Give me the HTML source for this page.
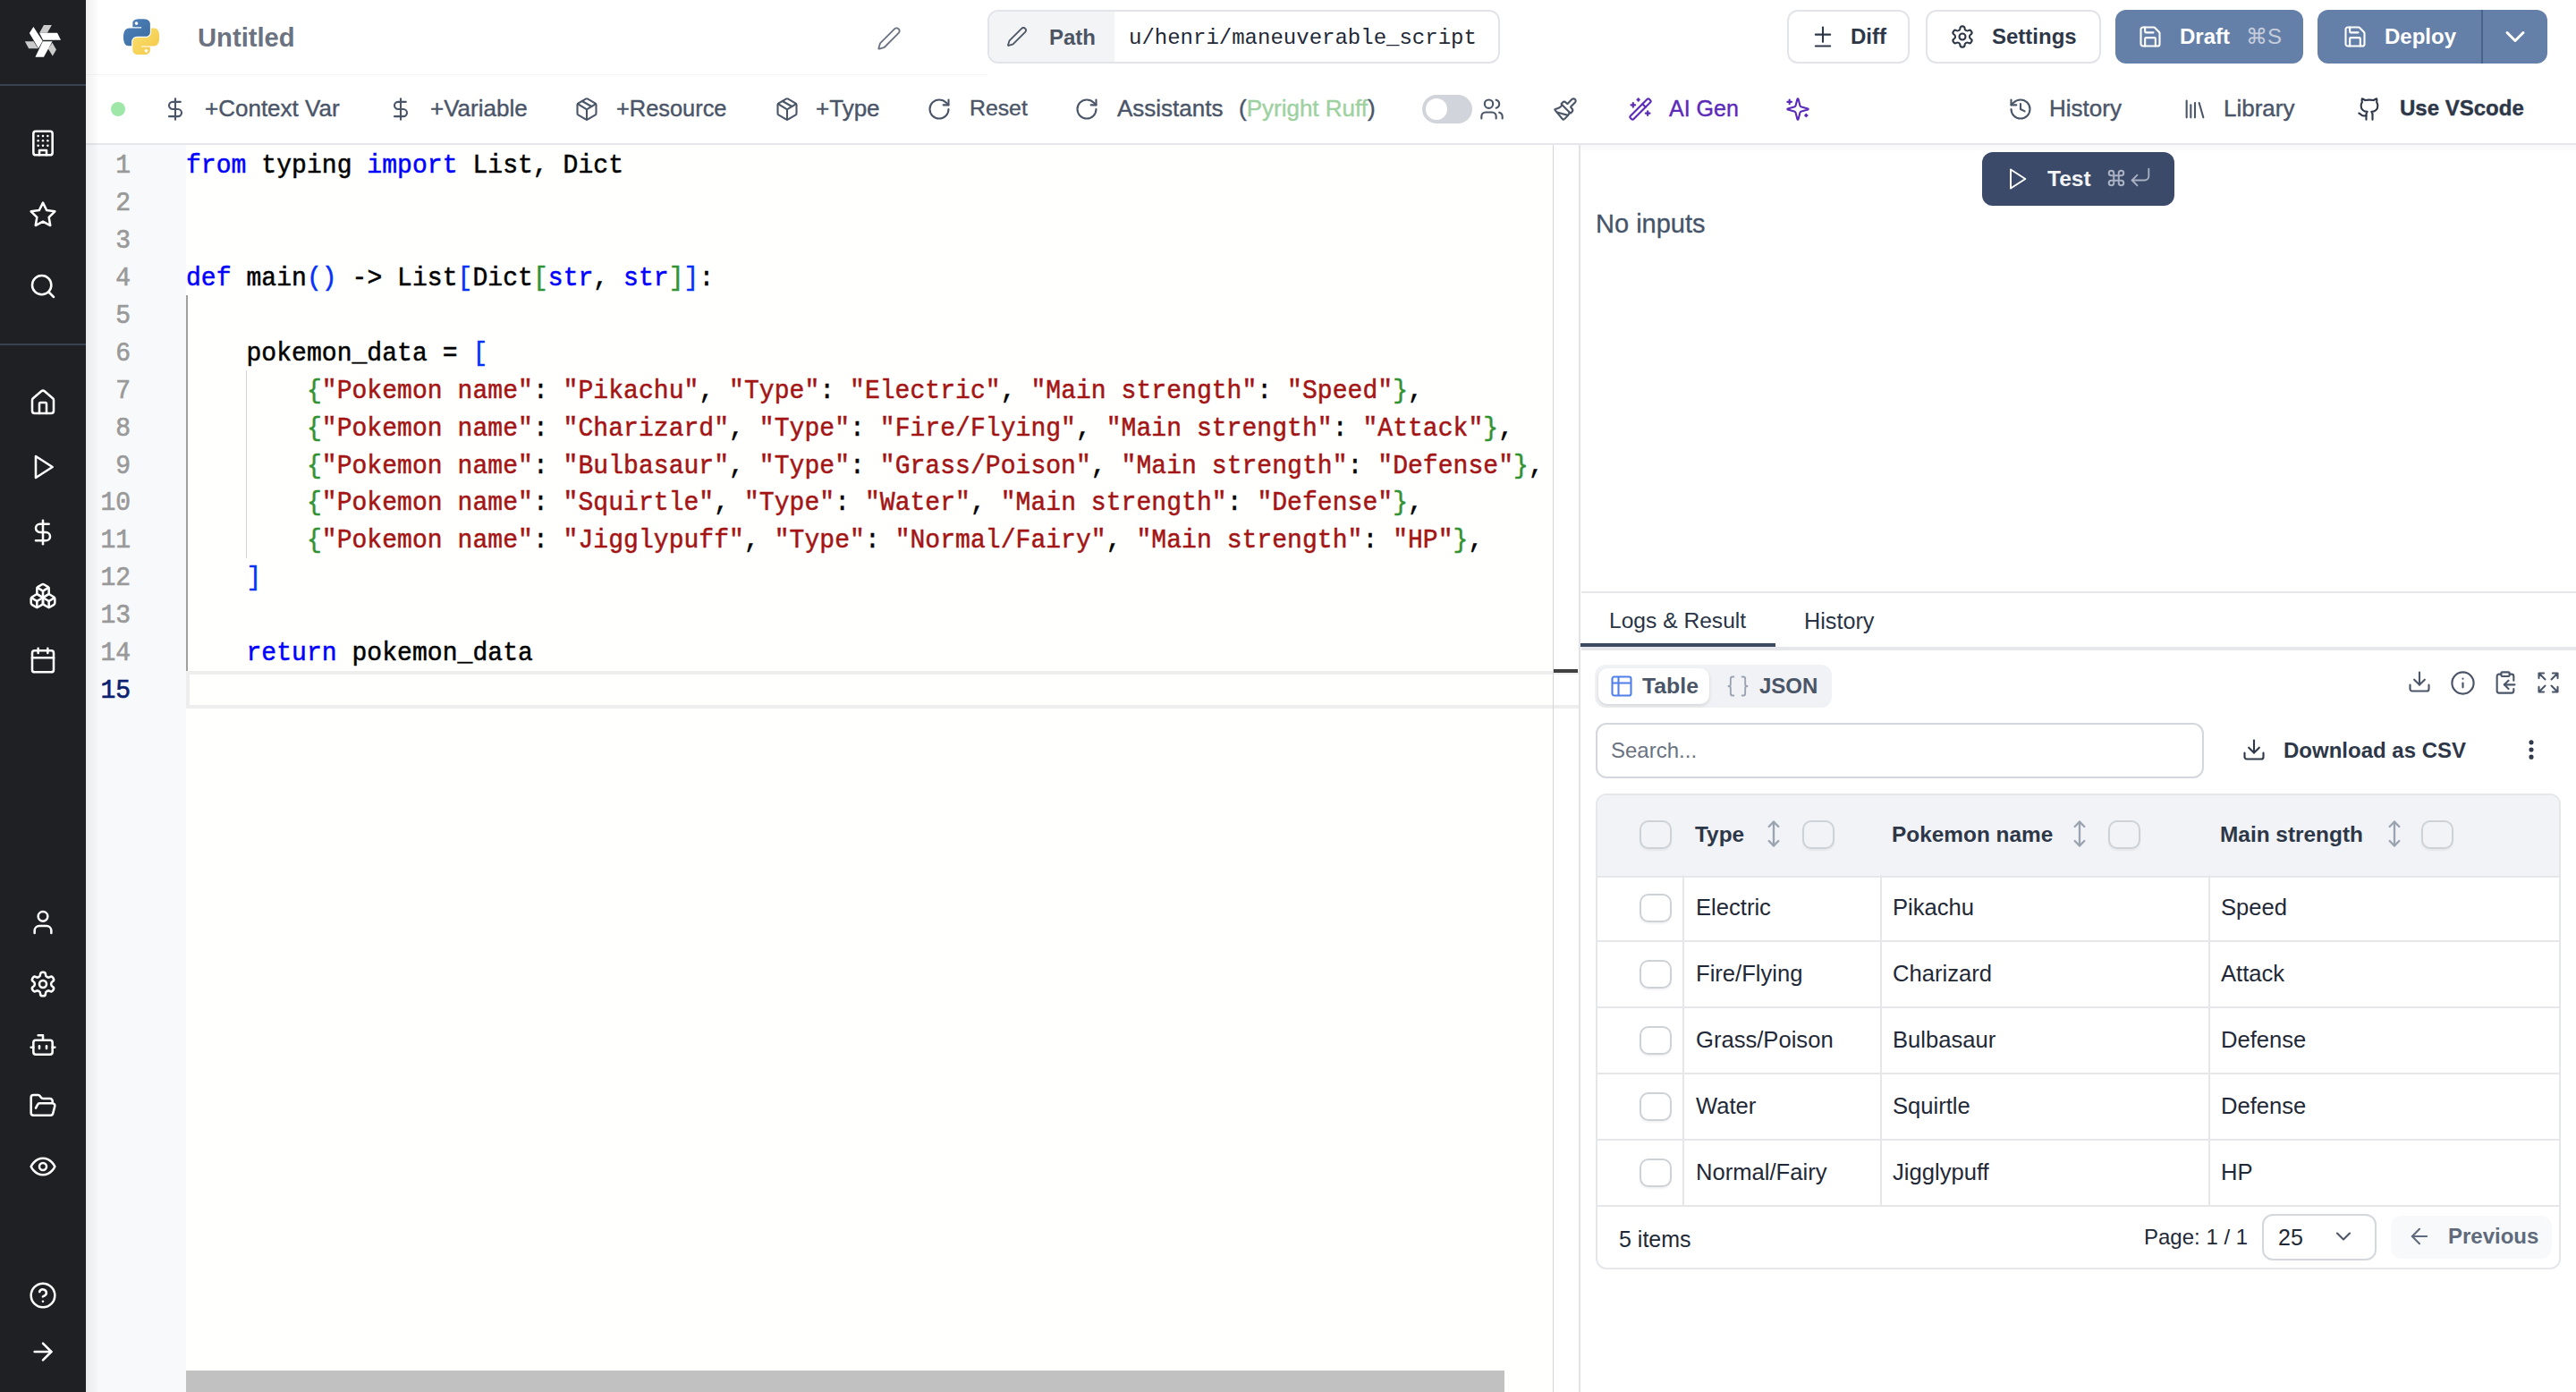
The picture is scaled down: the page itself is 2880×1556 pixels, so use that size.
<!DOCTYPE html>
<html><head><meta charset="utf-8">
<style>
html,body{margin:0;padding:0;background:#fff;overflow:hidden}
#root{position:relative;width:1440px;height:778px;zoom:2;overflow:hidden;font-family:"Liberation Sans",sans-serif;background:#fff}
.a{position:absolute}
.ic{position:absolute;fill:none;stroke:currentColor;stroke-width:2;stroke-linecap:round;stroke-linejoin:round}
.t{position:absolute;white-space:nowrap}
#side{left:0;top:0;width:48px;height:778px;background:#1f2024}
#side .ic{color:#fff;width:16px;height:16px;left:16px;stroke-width:1.9;margin-top:1px}
.code{position:absolute;left:104px;font-family:"Liberation Mono",monospace;font-size:14px;line-height:21px;white-space:pre;color:#000;-webkit-text-stroke:0.25px currentColor;letter-spacing:0.03px;transform:translateY(0.55px) scaleY(1.05);transform-origin:0 0}
.ln{position:absolute;left:56px;width:17px;text-align:right;font-family:"Liberation Mono",monospace;font-size:14px;line-height:21px;color:#999;-webkit-text-stroke:0.3px currentColor;transform:translateY(0.55px) scaleY(1.05);transform-origin:0 0}
.tb{top:50.5px;line-height:20px;font-size:13px;color:#4a5568;-webkit-text-stroke:0.2px currentColor}
.cb{width:18px;height:16px;box-sizing:border-box;border:1px solid #cdd1d8;border-radius:5px;box-shadow:0 1px 1px rgba(0,0,0,0.05)}
.th{top:456.5px;line-height:20px;font-size:12.2px;font-weight:bold;color:#2d3748}
.td{line-height:20px;font-size:12.8px;color:#1f2937}
.srt{top:458px;width:16px;height:16px;color:#9aa3b0;stroke-width:1.75}
.kw{color:#0000ff}.st{color:#a31515}.br1{color:#0431fa}.br2{color:#319331}
</style></head><body><div id="root">

<!-- sidebar -->
<div id="side" class="a">
  <div class="a" style="left:0;top:47px;width:48px;height:1px;background:#3a4252"></div>
  <div class="a" style="left:0;top:192px;width:48px;height:1px;background:#3a4252"></div>

  <svg class="a" style="left:10px;top:10px;width:28px;height:26px" viewBox="0 0 1499 1392">
    <polygon fill="#cbcbcb" points="210,700 470,700 605,915 325,915"/>
    <polygon fill="#fff" points="465,265 740,690 615,910 345,455"/>
    <polygon fill="#cbcbcb" points="775,215 1015,215 880,450 645,450"/>
    <polygon fill="#fff" points="645,450 1180,450 1285,660 750,660"/>
    <polygon fill="#cbcbcb" points="1030,740 1150,950 1040,1140 905,925"/>
    <polygon fill="#fff" points="745,705 1030,705 775,1170 520,1170"/>
  </svg>
  <svg class="ic" style="top:71px" viewBox="0 0 24 24"><rect width="16" height="20" x="4" y="2" rx="2" ry="2"/><path d="M9 22v-4h6v4"/><path d="M8 6h.01"/><path d="M16 6h.01"/><path d="M12 6h.01"/><path d="M12 10h.01"/><path d="M12 14h.01"/><path d="M16 10h.01"/><path d="M16 14h.01"/><path d="M8 10h.01"/><path d="M8 14h.01"/></svg>
  <svg class="ic" style="top:111px" viewBox="0 0 24 24"><polygon points="12 2 15.09 8.26 22 9.27 17 14.14 18.18 21.02 12 17.77 5.82 21.02 7 14.14 2 9.27 8.91 8.26 12 2"/></svg>
  <svg class="ic" style="top:151px" viewBox="0 0 24 24"><circle cx="11" cy="11" r="8"/><path d="m21 21-4.3-4.3"/></svg>
  <svg class="ic" style="top:216px" viewBox="0 0 24 24"><path d="M15 21v-8a1 1 0 0 0-1-1h-4a1 1 0 0 0-1 1v8"/><path d="M3 10a2 2 0 0 1 .709-1.528l7-5.999a2 2 0 0 1 2.582 0l7 5.999A2 2 0 0 1 21 10v9a2 2 0 0 1-2 2H5a2 2 0 0 1-2-2z"/></svg>
  <svg class="ic" style="top:252px" viewBox="0 0 24 24"><polygon points="6 3 20 12 6 21 6 3"/></svg>
  <svg class="ic" style="top:288.5px" viewBox="0 0 24 24"><line x1="12" x2="12" y1="2" y2="22"/><path d="M17 5H9.5a3.5 3.5 0 0 0 0 7h5a3.5 3.5 0 0 1 0 7H6"/></svg>
  <svg class="ic" style="top:324px" viewBox="0 0 24 24"><path d="M2.97 12.92A2 2 0 0 0 2 14.63v3.24a2 2 0 0 0 .97 1.71l3 1.8a2 2 0 0 0 2.06 0L12 19v-5.5l-5-3-4.030 2.42Z"/><path d="m7 16.5-4.74-2.85"/><path d="m7 16.5 5-3"/><path d="M7 16.5v5.17"/><path d="M12 13.5V19l3.97 2.38a2 2 0 0 0 2.06 0l3-1.8a2 2 0 0 0 .97-1.71v-3.24a2 2 0 0 0-.97-1.71L17 10.5l-5 3Z"/><path d="m17 16.5-5-3"/><path d="m17 16.5 4.74-2.85"/><path d="M17 16.5v5.17"/><path d="M7.97 4.42A2 2 0 0 0 7 6.13v4.370l5 3 5-3V6.13a2 2 0 0 0-.97-1.71l-3-1.8a2 2 0 0 0-2.06 0l-3 1.8Z"/><path d="M12 8 7.26 5.15"/><path d="m12 8 4.74-2.85"/><path d="M12 13.5V8"/></svg>
  <svg class="ic" style="top:360px" viewBox="0 0 24 24"><path d="M8 2v4"/><path d="M16 2v4"/><rect width="18" height="18" x="3" y="4" rx="2"/><path d="M3 10h18"/></svg>
  <svg class="ic" style="top:506.5px" viewBox="0 0 24 24"><path d="M19 21v-2a4 4 0 0 0-4-4H9a4 4 0 0 0-4 4v2"/><circle cx="12" cy="7" r="4"/></svg>
  <svg class="ic" style="top:541px" viewBox="0 0 24 24"><path d="M12.22 2h-.44a2 2 0 0 0-2 2v.18a2 2 0 0 1-1 1.73l-.43.25a2 2 0 0 1-2 0l-.15-.08a2 2 0 0 0-2.73.73l-.22.38a2 2 0 0 0 .73 2.730l.15.1a2 2 0 0 1 1 1.72v.51a2 2 0 0 1-1 1.74l-.15.09a2 2 0 0 0-.73 2.73l.22.38a2 2 0 0 0 2.73.73l.15-.08a2 2 0 0 1 2 0l.43.25a2 2 0 0 1 1 1.73V20a2 2 0 0 0 2 2h.44a2 2 0 0 0 2-2v-.18a2 2 0 0 1 1-1.73l.43-.25a2 2 0 0 1 2 0l.15.08a2 2 0 0 0 2.73-.73l.22-.39a2 2 0 0 0-.73-2.73l-.15-.08a2 2 0 0 1-1-1.74v-.5a2 2 0 0 1 1-1.74l.15-.09a2 2 0 0 0 .73-2.73l-.22-.38a2 2 0 0 0-2.73-.73l-.15.08a2 2 0 0 1-2 0l-.43-.25a2 2 0 0 1-1-1.73V4a2 2 0 0 0-2-2z"/><circle cx="12" cy="12" r="3"/></svg>
  <svg class="ic" style="top:575px" viewBox="0 0 24 24"><path d="M12 8V4H8"/><rect width="16" height="12" x="4" y="8" rx="2"/><path d="M2 14h2"/><path d="M20 14h2"/><path d="M15 13v2"/><path d="M9 13v2"/></svg>
  <svg class="ic" style="top:609px" viewBox="0 0 24 24"><path d="m6 14 1.5-2.9A2 2 0 0 1 9.24 10H20a2 2 0 0 1 1.94 2.5l-1.54 6a2 2 0 0 1-1.95 1.5H4a2 2 0 0 1-2-2V5a2 2 0 0 1 2-2h3.9a2 2 0 0 1 1.69.9l.81 1.2a2 2 0 0 0 1.67.9H18a2 2 0 0 1 2 2v2"/></svg>
  <svg class="ic" style="top:643px" viewBox="0 0 24 24"><path d="M2 12s3-7 10-7 10 7 10 7-3 7-10 7-10-7-10-7Z"/><circle cx="12" cy="12" r="3"/></svg>
  <svg class="ic" style="top:715px" viewBox="0 0 24 24"><circle cx="12" cy="12" r="10"/><path d="M9.09 9a3 3 0 0 1 5.83 1c0 2-3 3-3 3"/><path d="M12 17h.01"/></svg>
  <svg class="ic" style="top:746.5px" viewBox="0 0 24 24"><path d="M5 12h14"/><path d="m12 5 7 7-7 7"/></svg>
</div>


<!-- header -->
<div class="t" style="left:110.5px;top:11px;font-size:14.6px;line-height:20px;font-weight:bold;color:#6b7280">Untitled</div>


<svg class="a" style="left:69px;top:10.5px;width:20px;height:20px" viewBox="0 0 111 111">
  <defs>
   <linearGradient id="pb" x1="0" y1="0" x2="1" y2="1"><stop offset="0" stop-color="#4f83bd"/><stop offset="1" stop-color="#3b6a9c"/></linearGradient>
   <linearGradient id="py" x1="0" y1="0" x2="1" y2="1"><stop offset="0" stop-color="#fbe070"/><stop offset="1" stop-color="#f2c745"/></linearGradient>
  </defs>
  <path fill="url(#pb)" d="M54.9,0.5c-4.6,0-9,0.4-12.8,1.1C30.7,3.6,28.7,7.8,28.7,15.6v10.3h27.1v3.4H18.5c-7.9,0-14.8,4.7-16.9,13.7c-2.5,10.3-2.6,16.7,0,27.5c1.9,8,6.5,13.7,14.4,13.7h9.3V71.9c0-8.9,7.7-16.8,16.9-16.8h27.1c7.5,0,13.6-6.2,13.6-13.8V15.6c0-7.3-6.2-12.8-13.6-14.1C64.6,0.8,59.5,0.5,54.9,0.5z M40.3,8.8c2.8,0,5.1,2.3,5.1,5.2c0,2.9-2.3,5.1-5.1,5.1c-2.8,0-5.1-2.3-5.1-5.1C35.2,11.1,37.4,8.8,40.3,8.8z"/>
  <path fill="url(#py)" d="M86,29.3v12c0,9.3-7.9,17.1-16.9,17.1H42c-7.4,0-13.6,6.4-13.6,13.8v25.8c0,7.3,6.4,11.6,13.6,13.7c8.6,2.5,16.8,3,27.1,0c6.8-2,13.6-5.9,13.6-13.7V87.7H55.6v-3.4h40.7c7.900,0,10.8-5.5,13.6-13.7c2.8-8.5,2.7-16.7,0-27.5c-1.9-7.8-5.7-13.7-13.6-13.7H86z M70.7,94.3c2.8,0,5.1,2.3,5.1,5.1c0,2.9-2.3,5.2-5.1,5.2c-2.8,0-5.1-2.3-5.1-5.2C65.6,96.6,67.9,94.3,70.7,94.3z"/>
</svg>
<svg class="ic" style="left:490px;top:14.5px;width:14px;height:14px;color:#6b7280;stroke-width:1.6" viewBox="0 0 24 24"><path d="M21.174 6.812a1 1 0 0 0-3.986-3.987L3.842 16.174a2 2 0 0 0-.5.83l-1.321 4.352a.5.5 0 0 0 .623.622l4.353-1.32a2 2 0 0 0 .83-.497z"/></svg>

<div class="a" style="left:552px;top:5.5px;width:286.5px;height:30px;box-sizing:border-box;border:1px solid #e2e4e9;border-radius:6px;overflow:hidden">
  <div class="a" style="left:0;top:0;width:70px;height:28px;background:#f3f4f6"></div>
</div>
<svg class="ic" style="left:562.5px;top:14.5px;width:12px;height:12px;color:#4b5563;stroke-width:1.8" viewBox="0 0 24 24"><path d="M21.174 6.812a1 1 0 0 0-3.986-3.987L3.842 16.174a2 2 0 0 0-.5.83l-1.321 4.352a.5.5 0 0 0 .623.622l4.353-1.32a2 2 0 0 0 .83-.497z"/></svg>
<div class="t" style="left:586.5px;top:11px;line-height:20px;font-size:12px;font-weight:bold;color:#4b5563">Path</div>
<div class="t" style="left:631px;top:11.5px;line-height:20px;font-family:'Liberation Mono',monospace;font-size:12px;color:#1f2937">u/henri/maneuverable_script</div>

<div class="a" style="left:999px;top:5.5px;width:68.5px;height:30px;box-sizing:border-box;border:1px solid #e2e4e9;border-radius:6px"></div>
<svg class="ic" style="left:1012px;top:13.5px;width:14px;height:14px;color:#2d3748;stroke-width:1.8" viewBox="0 0 24 24"><path d="M12 3v14"/><path d="M5 10h14"/><path d="M5 21h14"/></svg>
<div class="t" style="left:1034.5px;top:10.5px;line-height:20px;font-size:12px;font-weight:bold;color:#2d3748">Diff</div>

<div class="a" style="left:1076.5px;top:5.5px;width:98px;height:30px;box-sizing:border-box;border:1px solid #e2e4e9;border-radius:6px"></div>
<svg class="ic" style="left:1090px;top:13.5px;width:14px;height:14px;color:#2d3748;stroke-width:1.8" viewBox="0 0 24 24"><path d="M12.22 2h-.44a2 2 0 0 0-2 2v.18a2 2 0 0 1-1 1.73l-.43.25a2 2 0 0 1-2 0l-.15-.08a2 2 0 0 0-2.73.73l-.22.38a2 2 0 0 0 .73 2.73l.15.1a2 2 0 0 1 1 1.72v.51a2 2 0 0 1-1 1.74l-.15.09a2 2 0 0 0-.73 2.73l.22.38a2 2 0 0 0 2.73.73l.15-.08a2 2 0 0 1 2 0l.43.25a2 2 0 0 1 1 1.73V20a2 2 0 0 0 2 2h.44a2 2 0 0 0 2-2v-.18a2 2 0 0 1 1-1.73l.43-.25a2 2 0 0 1 2 0l.15.08a2 2 0 0 0 2.73-.73l.22-.39a2 2 0 0 0-.73-2.73l-.15-.08a2 2 0 0 1-1-1.74v-.5a2 2 0 0 1 1-1.74l.15-.09a2 2 0 0 0 .73-2.73l-.22-.38a2 2 0 0 0-2.73-.73l-.15.08a2 2 0 0 1-2 0l-.43-.25a2 2 0 0 1-1-1.73V4a2 2 0 0 0-2-2z"/><circle cx="12" cy="12" r="3"/></svg>
<div class="t" style="left:1113.5px;top:10.5px;line-height:20px;font-size:12px;font-weight:bold;color:#2d3748">Settings</div>

<div class="a" style="left:1182.5px;top:5.5px;width:105px;height:30px;border-radius:6px;background:#6580a8"></div>
<svg class="ic" style="left:1195px;top:13.5px;width:14px;height:14px;color:#fff;stroke-width:1.8" viewBox="0 0 24 24"><path d="M15.2 3a2 2 0 0 1 1.4.6l3.8 3.8a2 2 0 0 1 .6 1.4V19a2 2 0 0 1-2 2H5a2 2 0 0 1-2-2V5a2 2 0 0 1 2-2z"/><path d="M17 21v-7a1 1 0 0 0-1-1H8a1 1 0 0 0-1 1v7"/><path d="M7 3v4a1 1 0 0 0 1 1h7"/></svg>
<div class="t" style="left:1218.5px;top:10.5px;line-height:20px;font-size:12px;font-weight:bold;color:#fff">Draft</div>
<div class="t" style="left:1255.5px;top:10.5px;line-height:20px;font-size:12px;color:#c5cddc">&#8984;S</div>

<div class="a" style="left:1295.5px;top:5.5px;width:128.5px;height:30px;border-radius:6px;background:#6580a8"></div>
<div class="a" style="left:1387px;top:5.5px;width:1px;height:30px;background:#4a6189"></div>
<svg class="ic" style="left:1309.5px;top:13.5px;width:14px;height:14px;color:#fff;stroke-width:1.8" viewBox="0 0 24 24"><path d="M15.2 3a2 2 0 0 1 1.4.6l3.8 3.8a2 2 0 0 1 .6 1.4V19a2 2 0 0 1-2 2H5a2 2 0 0 1-2-2V5a2 2 0 0 1 2-2z"/><path d="M17 21v-7a1 1 0 0 0-1-1H8a1 1 0 0 0-1 1v7"/><path d="M7 3v4a1 1 0 0 0 1 1h7"/></svg>
<div class="t" style="left:1333px;top:10.5px;line-height:20px;font-size:12px;font-weight:bold;color:#fff">Deploy</div>
<svg class="ic" style="left:1396px;top:11.5px;width:20px;height:18px;color:#fff;stroke-width:2" viewBox="0 0 24 24"><path d="m6 9 6 6 6-6"/></svg>

<!-- toolbar -->
<div class="a" style="left:48px;top:41.5px;width:504px;height:0.5px;background:#f5f5f6"></div>
<div class="a" style="left:48px;top:80px;width:1392px;height:1px;background:#e5e7eb"></div>
<div class="a" style="left:62px;top:57px;width:8px;height:8px;border-radius:50%;background:#9fe6a9"></div>

<svg class="ic" style="left:91px;top:54px;width:14px;height:14px;color:#4a5568;stroke-width:1.8" viewBox="0 0 24 24"><line x1="12" x2="12" y1="2" y2="22"/><path d="M17 5H9.5a3.5 3.5 0 0 0 0 7h5a3.5 3.5 0 0 1 0 7H6"/></svg>
<div class="t tb" style="left:114.5px">+Context Var</div>
<svg class="ic" style="left:217px;top:54px;width:14px;height:14px;color:#4a5568;stroke-width:1.8" viewBox="0 0 24 24"><line x1="12" x2="12" y1="2" y2="22"/><path d="M17 5H9.5a3.5 3.5 0 0 0 0 7h5a3.5 3.5 0 0 1 0 7H6"/></svg>
<div class="t tb" style="left:240.5px">+Variable</div>
<svg class="ic" style="left:321px;top:54px;width:14px;height:14px;color:#4a5568;stroke-width:1.8" viewBox="0 0 24 24"><path d="M11 21.73a2 2 0 0 0 2 0l7-4A2 2 0 0 0 21 16V8a2 2 0 0 0-1-1.73l-7-4a2 2 0 0 0-2 0l-7 4A2 2 0 0 0 3 8v8a2 2 0 0 0 1 1.73z"/><path d="M12 22V12"/><path d="m3.3 7 7.703 4.734a2 2 0 0 0 1.994 0L20.7 7"/><path d="m7.5 4.27 9 5.15"/></svg>
<div class="t tb" style="left:344.5px;font-size:12.7px">+Resource</div>
<svg class="ic" style="left:433px;top:54px;width:14px;height:14px;color:#4a5568;stroke-width:1.8" viewBox="0 0 24 24"><path d="M11 21.73a2 2 0 0 0 2 0l7-4A2 2 0 0 0 21 16V8a2 2 0 0 0-1-1.73l-7-4a2 2 0 0 0-2 0l-7 4A2 2 0 0 0 3 8v8a2 2 0 0 0 1 1.73z"/><path d="M12 22V12"/><path d="m3.3 7 7.703 4.734a2 2 0 0 0 1.994 0L20.7 7"/><path d="m7.5 4.27 9 5.15"/></svg>
<div class="t tb" style="left:456px">+Type</div>
<svg class="ic" style="left:518px;top:54px;width:14px;height:14px;color:#4a5568;stroke-width:1.8" viewBox="0 0 24 24"><path d="M21 12a9 9 0 1 1-9-9c2.52 0 4.93 1 6.74 2.74L21 8"/><path d="M21 3v5h-5"/></svg>
<div class="t tb" style="left:542px;font-size:12.4px">Reset</div>
<svg class="ic" style="left:600.5px;top:54px;width:14px;height:14px;color:#4a5568;stroke-width:1.8" viewBox="0 0 24 24"><path d="M21 12a9 9 0 1 1-9-9c2.52 0 4.93 1 6.74 2.74L21 8"/><path d="M21 3v5h-5"/></svg>
<div class="t tb" style="left:624.5px">Assistants</div>
<div class="t tb" style="left:692.5px">(<span style="color:#9dd19f">Pyright Ruff</span>)</div>
<div class="a" style="left:795px;top:53px;width:28px;height:16px;border-radius:8px;background:#d1d5db"></div>
<div class="a" style="left:797px;top:55px;width:12px;height:12px;border-radius:50%;background:#fff"></div>
<svg class="ic" style="left:827px;top:54px;width:14px;height:14px;color:#4a5568;stroke-width:1.8" viewBox="0 0 24 24"><path d="M16 21v-2a4 4 0 0 0-4-4H6a4 4 0 0 0-4 4v2"/><circle cx="9" cy="7" r="4"/><path d="M22 21v-2a4 4 0 0 0-3-3.87"/><path d="M16 3.13a4 4 0 0 1 0 7.75"/></svg>
<svg class="ic" style="left:868px;top:54px;width:14px;height:14px;color:#4a5568;stroke-width:1.8" viewBox="0 0 24 24"><path d="m14.622 17.897-10.68-2.913"/><path d="M18.376 2.622a1 1 0 1 1 3.002 3.002L17.36 9.643a.5.5 0 0 0 0 .707l.944.944a2.41 2.41 0 0 1 0 3.408l-.944.944a.5.5 0 0 1-.707 0L8.354 7.348a.5.5 0 0 1 0-.707l.944-.944a2.41 2.41 0 0 1 3.408 0l.944.944a.5.5 0 0 0 .707 0z"/><path d="M9 8c-1.804 2.71-3.970 3.46-6.583 3.948a.507.507 0 0 0-.302.819l7.32 8.883a1 1 0 0 0 1.185.204C12.735 20.405 16 16.792 16 15"/></svg>
<svg class="ic" style="left:910px;top:54px;width:14px;height:14px;color:#5b2ab8;stroke-width:1.8" viewBox="0 0 24 24"><path d="m21.64 3.64-1.28-1.28a1.21 1.21 0 0 0-1.72 0L2.36 18.64a1.21 1.21 0 0 0 0 1.72l1.28 1.28a1.2 1.2 0 0 0 1.72 0L21.64 5.36a1.2 1.2 0 0 0 0-1.72"/><path d="m14 7 3 3"/><path d="M5 6v4"/><path d="M19 14v4"/><path d="M10 2v2"/><path d="M7 8H3"/><path d="M21 16h-4"/><path d="M11 3H9"/></svg>
<div class="t tb" style="left:933px;color:#5b2ab8;font-size:12.5px">AI Gen</div>
<svg class="ic" style="left:998px;top:54px;width:14px;height:14px;color:#5b2ab8;stroke-width:1.8;transform:scaleX(-1)" viewBox="0 0 24 24"><path d="M9.937 15.5A2 2 0 0 0 8.5 14.063l-6.135-1.582a.5.5 0 0 1 0-.962L8.5 9.936A2 2 0 0 0 9.937 8.5l1.582-6.135a.5.5 0 0 1 .963 0L14.063 8.5A2 2 0 0 0 15.5 9.937l6.135 1.581a.5.5 0 0 1 0 .964L15.5 14.063a2 2 0 0 0-1.437 1.437l-1.582 6.135a.5.5 0 0 1-.963 0z"/><path d="M20 3v4"/><path d="M22 5h-4"/><path d="M4 17v2"/><path d="M5 18H3"/></svg>
<svg class="ic" style="left:1122.5px;top:54px;width:14px;height:14px;color:#4a5568;stroke-width:1.8" viewBox="0 0 24 24"><path d="M3 12a9 9 0 1 0 9-9 9.75 9.75 0 0 0-6.74 2.74L3 8"/><path d="M3 3v5h5"/><path d="M12 7v5l4 2"/></svg>
<div class="t tb" style="left:1145.5px">History</div>
<svg class="ic" style="left:1220px;top:54px;width:14px;height:14px;color:#4a5568;stroke-width:1.8" viewBox="0 0 24 24"><path d="m16 6 4 14"/><path d="M12 6v14"/><path d="M8 8v12"/><path d="M4 4v16"/></svg>
<div class="t tb" style="left:1243px">Library</div>
<svg class="ic" style="left:1317.5px;top:54px;width:14px;height:14px;color:#2d3748;stroke-width:1.8" viewBox="0 0 24 24"><path d="M15 22v-4a4.8 4.8 0 0 0-1-3.5c3 0 6-2 6-5.5.08-1.25-.27-2.48-1-3.5.28-1.15.28-2.35 0-3.5 0 0-1 0-3 1.5-2.64-.5-5.36-.5-8 0C6 2 5 2 5 2c-.3 1.15-.3 2.35 0 3.5A5.403 5.403 0 0 0 4 9c0 3.5 3 5.5 6 5.5-.39.49-.68 1.05-.85 1.65-.17.6-.22 1.23-.15 1.85v4"/><path d="M9 18c-4.51 2-5-2-7-2"/></svg>
<div class="t tb" style="left:1341.5px;font-weight:bold;color:#2d3748;font-size:12px">Use VScode</div>

<!-- editor -->
<div class="a" style="left:48px;top:81px;width:56px;height:697px;background:#f8f9fb"></div>
<div class="a" style="left:104px;top:81px;width:764px;height:697px;background:#fffffe"></div>


<div class="a" style="left:104px;top:165px;width:1px;height:210px;background:#a0a0a0"></div>
<div class="a" style="left:137.5px;top:207px;width:0.5px;height:105px;background:#d3d3d3"></div>
<div class="a" style="left:104px;top:375px;width:778.5px;height:21px;box-sizing:border-box;border:2px solid #eeeeee;border-right:0"></div>
<div class="a" style="left:104px;top:765.8px;width:737px;height:12.2px;background:#c1c1c1"></div>
<div class="ln" style="top:81px;color:#999">1</div>
<div class="code" style="top:81px"><span class="kw">from</span> typing <span class="kw">import</span> List, Dict</div>
<div class="ln" style="top:102px;color:#999">2</div>
<div class="ln" style="top:123px;color:#999">3</div>
<div class="ln" style="top:144px;color:#999">4</div>
<div class="code" style="top:144px"><span class="kw">def</span> main<span class="br1">()</span> -&gt; List<span class="br1">[</span>Dict<span class="br2">[</span><span class="kw">str</span>, <span class="kw">str</span><span class="br2">]</span><span class="br1">]</span>:</div>
<div class="ln" style="top:165px;color:#999">5</div>
<div class="ln" style="top:186px;color:#999">6</div>
<div class="code" style="top:186px">    pokemon_data = <span class="br1">[</span></div>
<div class="ln" style="top:207px;color:#999">7</div>
<div class="code" style="top:207px">        <span class="br2">{</span><span class="st">&quot;Pokemon name&quot;</span>: <span class="st">&quot;Pikachu&quot;</span>, <span class="st">&quot;Type&quot;</span>: <span class="st">&quot;Electric&quot;</span>, <span class="st">&quot;Main strength&quot;</span>: <span class="st">&quot;Speed&quot;</span><span class="br2">}</span>,</div>
<div class="ln" style="top:228px;color:#999">8</div>
<div class="code" style="top:228px">        <span class="br2">{</span><span class="st">&quot;Pokemon name&quot;</span>: <span class="st">&quot;Charizard&quot;</span>, <span class="st">&quot;Type&quot;</span>: <span class="st">&quot;Fire/Flying&quot;</span>, <span class="st">&quot;Main strength&quot;</span>: <span class="st">&quot;Attack&quot;</span><span class="br2">}</span>,</div>
<div class="ln" style="top:249px;color:#999">9</div>
<div class="code" style="top:249px">        <span class="br2">{</span><span class="st">&quot;Pokemon name&quot;</span>: <span class="st">&quot;Bulbasaur&quot;</span>, <span class="st">&quot;Type&quot;</span>: <span class="st">&quot;Grass/Poison&quot;</span>, <span class="st">&quot;Main strength&quot;</span>: <span class="st">&quot;Defense&quot;</span><span class="br2">}</span>,</div>
<div class="ln" style="top:270px;color:#999">10</div>
<div class="code" style="top:270px">        <span class="br2">{</span><span class="st">&quot;Pokemon name&quot;</span>: <span class="st">&quot;Squirtle&quot;</span>, <span class="st">&quot;Type&quot;</span>: <span class="st">&quot;Water&quot;</span>, <span class="st">&quot;Main strength&quot;</span>: <span class="st">&quot;Defense&quot;</span><span class="br2">}</span>,</div>
<div class="ln" style="top:291px;color:#999">11</div>
<div class="code" style="top:291px">        <span class="br2">{</span><span class="st">&quot;Pokemon name&quot;</span>: <span class="st">&quot;Jigglypuff&quot;</span>, <span class="st">&quot;Type&quot;</span>: <span class="st">&quot;Normal/Fairy&quot;</span>, <span class="st">&quot;Main strength&quot;</span>: <span class="st">&quot;HP&quot;</span><span class="br2">}</span>,</div>
<div class="ln" style="top:312px;color:#999">12</div>
<div class="code" style="top:312px">    <span class="br1">]</span></div>
<div class="ln" style="top:333px;color:#999">13</div>
<div class="ln" style="top:354px;color:#999">14</div>
<div class="code" style="top:354px">    <span class="kw">return</span> pokemon_data</div>
<div class="ln" style="top:375px;color:#0b216f">15</div>
<div class="a" style="left:48px;top:0;width:8px;height:778px;background:linear-gradient(to right,rgba(0,0,0,0.06),rgba(0,0,0,0))"></div>
<!-- right panel -->
<div class="a" style="left:868px;top:81px;width:0.5px;height:697px;background:#d4d4d4"></div>
<div class="a" style="left:868.5px;top:374px;width:13.5px;height:2px;background:#404040"></div>
<div class="a" style="left:882.5px;top:81px;width:1px;height:697px;background:#e2e3e6"></div>

<div class="a" style="left:883.5px;top:81px;width:556.5px;height:4px;background:linear-gradient(to bottom,rgba(0,0,0,0.035),rgba(0,0,0,0))"></div>
<div class="a" style="left:1108px;top:85px;width:107.5px;height:30px;border-radius:6px;background:#3b4a69"></div>
<svg class="ic" style="left:1120.5px;top:93px;width:14px;height:14px;color:#fff;stroke-width:1.7" viewBox="0 0 24 24"><polygon points="6 3 20 12 6 21 6 3"/></svg>
<div class="t" style="left:1144.5px;top:90px;line-height:20px;font-size:12.3px;font-weight:bold;color:#f3f4f6">Test</div>
<svg class="ic" style="left:1177.5px;top:94px;width:11px;height:11px;color:#a9b1c2;stroke-width:2.2" viewBox="0 0 24 24"><path d="M15 6v12a3 3 0 1 0 3-3H6a3 3 0 1 0 3 3V6a3 3 0 1 0-3 3h12a3 3 0 1 0-3-3"/></svg>
<svg class="ic" style="left:1189.5px;top:92px;width:14px;height:14px;color:#a9b1c2;stroke-width:1.6" viewBox="0 0 24 24"><polyline points="9 10 4 15 9 20"/><path d="M20 4v7a4 4 0 0 1-4 4H4"/></svg>

<div class="t" style="left:892px;top:115px;line-height:20px;font-size:14.5px;color:#455468;-webkit-text-stroke:0.15px currentColor">No inputs</div>

<div class="a" style="left:884px;top:330.5px;width:556px;height:1px;background:#e5e7eb"></div>
<div class="t" style="left:899.5px;top:337px;line-height:20px;font-size:12.3px;color:#283344">Logs &amp; Result</div>
<div class="t" style="left:1008.5px;top:337px;line-height:20px;font-size:12.6px;color:#283344">History</div>
<div class="a" style="left:884px;top:361.5px;width:556px;height:2px;background:#e5e7eb"></div>
<div class="a" style="left:883.5px;top:359.5px;width:109px;height:2px;background:#3b4a5f"></div>

<div class="a" style="left:891.5px;top:371.5px;width:132.5px;height:24px;border-radius:6px;background:#f1f2f5"></div>
<div class="a" style="left:893.5px;top:373.5px;width:62px;height:20px;border-radius:5px;background:#fff;box-shadow:0 1px 2px rgba(0,0,0,0.12)"></div>
<svg class="ic" style="left:899.5px;top:376.5px;width:14px;height:14px;color:#4f7fe8;stroke-width:1.8" viewBox="0 0 24 24"><path d="M9 3H5a2 2 0 0 0-2 2v4m6-6h10a2 2 0 0 1 2 2v4M9 3v18m0 0h10a2 2 0 0 0 2-2V9M9 21H5a2 2 0 0 1-2-2V9m0 0h18"/></svg>
<div class="t" style="left:918px;top:373.5px;line-height:20px;font-size:12.4px;font-weight:bold;color:#4a5568">Table</div>
<svg class="ic" style="left:964.5px;top:376.5px;width:14px;height:14px;color:#9aa3b2;stroke-width:1.6" viewBox="0 0 24 24"><path d="M8 3H7a2 2 0 0 0-2 2v5a2 2 0 0 1-2 2 2 2 0 0 1 2 2v5c0 1.1.9 2 2 2h1"/><path d="M16 21h1a2 2 0 0 0 2-2v-5c0-1.1.9-2 2-2a2 2 0 0 1-2-2V5a2 2 0 0 0-2-2h-1"/></svg>
<div class="t" style="left:983.5px;top:373.5px;line-height:20px;font-size:12px;font-weight:bold;color:#4a5568">JSON</div>

<svg class="ic" style="left:1345.5px;top:374px;width:14px;height:14px;color:#4a5568;stroke-width:1.8" viewBox="0 0 24 24"><path d="M21 15v4a2 2 0 0 1-2 2H5a2 2 0 0 1-2-2v-4"/><polyline points="7 10 12 15 17 10"/><line x1="12" x2="12" y1="15" y2="3"/></svg>
<svg class="ic" style="left:1369.5px;top:374.5px;width:14.5px;height:14.5px;color:#4a5568;stroke-width:1.8" viewBox="0 0 24 24"><circle cx="12" cy="12" r="10"/><path d="M12 16v-4"/><path d="M12 8h.01"/></svg>
<svg class="ic" style="left:1393.5px;top:374.5px;width:14px;height:14px;color:#4a5568;stroke-width:1.8" viewBox="0 0 24 24"><rect width="8" height="4" x="8" y="2" rx="1" ry="1"/><path d="M8 4H6a2 2 0 0 0-2 2v14a2 2 0 0 0 2 2h12a2 2 0 0 0 2-2v-2"/><path d="M16 4h2a2 2 0 0 1 2 2v4"/><path d="M21 14H11"/><path d="m15 10-4 4 4 4"/></svg>
<svg class="ic" style="left:1417.5px;top:374.5px;width:14px;height:14px;color:#4a5568;stroke-width:1.8" viewBox="0 0 24 24"><path d="m21 21-6-6m6 6v-4.8m0 4.8h-4.8"/><path d="M3 16.2V21m0 0h4.8M3 21l6-6"/><path d="M21 7.8V3m0 0h-4.8M21 3l-6 6"/><path d="M3 7.8V3m0 0h4.8M3 3l6 6"/></svg>

<div class="a" style="left:892px;top:404px;width:340px;height:31px;box-sizing:border-box;border:1px solid #d4d7dd;border-radius:6px"></div>
<div class="t" style="left:900.5px;top:409.5px;line-height:20px;font-size:12px;color:#6b7280">Search...</div>
<svg class="ic" style="left:1253px;top:412px;width:14px;height:14px;color:#2d3748;stroke-width:1.8" viewBox="0 0 24 24"><path d="M21 15v4a2 2 0 0 1-2 2H5a2 2 0 0 1-2-2v-4"/><polyline points="7 10 12 15 17 10"/><line x1="12" x2="12" y1="15" y2="3"/></svg>
<div class="t" style="left:1276.5px;top:409.5px;line-height:20px;font-size:12px;font-weight:bold;color:#2d3748">Download as CSV</div>
<svg class="ic" style="left:1408px;top:412px;width:14px;height:14px;color:#2d3748;stroke-width:2.4" viewBox="0 0 24 24"><circle cx="12" cy="5" r="1"/><circle cx="12" cy="12" r="1"/><circle cx="12" cy="19" r="1"/></svg>

<div class="a" style="left:892px;top:443.5px;width:539.5px;height:266px;box-sizing:border-box;border:1px solid #e5e7eb;border-radius:6px;overflow:hidden">
<div class="a" style="left:0;top:0;width:100%;height:45px;background:#f2f3f6;border-bottom:1px solid #e5e7eb"></div>
</div>
<div class="a cb" style="left:916.5px;top:458.5px;background:#f2f3f6"></div>
<div class="t th" style="left:947.5px">Type</div>
<svg class="ic srt" style="left:983.5px" viewBox="0 0 24 24"><path d="M12 2v20"/><path d="m8 18 4 4 4-4"/><path d="m8 6 4-4 4 4"/></svg>
<div class="a cb" style="left:1007.5px;top:458.5px;background:#f2f3f6"></div>
<div class="t th" style="left:1057.5px">Pokemon name</div>
<svg class="ic srt" style="left:1154.5px" viewBox="0 0 24 24"><path d="M12 2v20"/><path d="m8 18 4 4 4-4"/><path d="m8 6 4-4 4 4"/></svg>
<div class="a cb" style="left:1178.5px;top:458.5px;background:#f2f3f6"></div>
<div class="t th" style="left:1241px">Main strength</div>
<svg class="ic srt" style="left:1330.5px" viewBox="0 0 24 24"><path d="M12 2v20"/><path d="m8 18 4 4 4-4"/><path d="m8 6 4-4 4 4"/></svg>
<div class="a cb" style="left:1353.5px;top:458.5px;background:#f2f3f6"></div>
<div class="a cb" style="left:916.5px;top:499.5px;background:#fff"></div>
<div class="t td" style="left:948px;top:497px">Electric</div>
<div class="t td" style="left:1058px;top:497px">Pikachu</div>
<div class="t td" style="left:1241.5px;top:497px">Speed</div>
<div class="a" style="left:892px;top:525.5px;width:539.5px;height:1px;background:#e5e7eb"></div>
<div class="a cb" style="left:916.5px;top:536.5px;background:#fff"></div>
<div class="t td" style="left:948px;top:534px">Fire/Flying</div>
<div class="t td" style="left:1058px;top:534px">Charizard</div>
<div class="t td" style="left:1241.5px;top:534px">Attack</div>
<div class="a" style="left:892px;top:562.5px;width:539.5px;height:1px;background:#e5e7eb"></div>
<div class="a cb" style="left:916.5px;top:573.5px;background:#fff"></div>
<div class="t td" style="left:948px;top:571px">Grass/Poison</div>
<div class="t td" style="left:1058px;top:571px">Bulbasaur</div>
<div class="t td" style="left:1241.5px;top:571px">Defense</div>
<div class="a" style="left:892px;top:599.5px;width:539.5px;height:1px;background:#e5e7eb"></div>
<div class="a cb" style="left:916.5px;top:610.5px;background:#fff"></div>
<div class="t td" style="left:948px;top:608px">Water</div>
<div class="t td" style="left:1058px;top:608px">Squirtle</div>
<div class="t td" style="left:1241.5px;top:608px">Defense</div>
<div class="a" style="left:892px;top:636.5px;width:539.5px;height:1px;background:#e5e7eb"></div>
<div class="a cb" style="left:916.5px;top:647.5px;background:#fff"></div>
<div class="t td" style="left:948px;top:645px">Normal/Fairy</div>
<div class="t td" style="left:1058px;top:645px">Jigglypuff</div>
<div class="t td" style="left:1241.5px;top:645px">HP</div>
<div class="a" style="left:892px;top:673.5px;width:539.5px;height:1px;background:#e5e7eb"></div>
<div class="a" style="left:940.5px;top:489px;width:1px;height:185px;background:#e5e7eb"></div>
<div class="a" style="left:1051px;top:489px;width:1px;height:185px;background:#e5e7eb"></div>
<div class="a" style="left:1234.5px;top:489px;width:1px;height:185px;background:#e5e7eb"></div>
<div class="t" style="left:905px;top:682.5px;line-height:20px;font-size:12.5px;color:#1f2937">5 items</div>
<div class="t" style="left:1198.5px;top:681.5px;line-height:20px;font-size:12px;color:#1f2937">Page: 1 / 1</div>
<div class="a" style="left:1264.5px;top:678.5px;width:64px;height:26px;box-sizing:border-box;border:1px solid #d4d7dd;border-radius:6px"></div>
<div class="t" style="left:1273.5px;top:681.5px;line-height:20px;font-size:12.5px;color:#1f2937">25</div>
<svg class="ic" style="left:1303px;top:684px;width:14px;height:14px;color:#4b5563;stroke-width:1.8" viewBox="0 0 24 24"><path d="m6 9 6 6 6-6"/></svg>
<div class="a" style="left:1336.5px;top:679.5px;width:90px;height:24px;border-radius:6px;background:#f8f9fa"></div>
<svg class="ic" style="left:1345.5px;top:684px;width:14px;height:14px;color:#5f6b7c;stroke-width:1.8" viewBox="0 0 24 24"><path d="m12 19-7-7 7-7"/><path d="M19 12H5"/></svg>
<div class="t" style="left:1368.5px;top:681px;line-height:20px;font-size:12px;font-weight:bold;color:#5f6b7c">Previous</div>
</div>
<script>(function(){var w=window.innerWidth||2880;var z=w/1440;if(z>0){document.getElementById("root").style.zoom=z;}})();</script>
</body></html>
